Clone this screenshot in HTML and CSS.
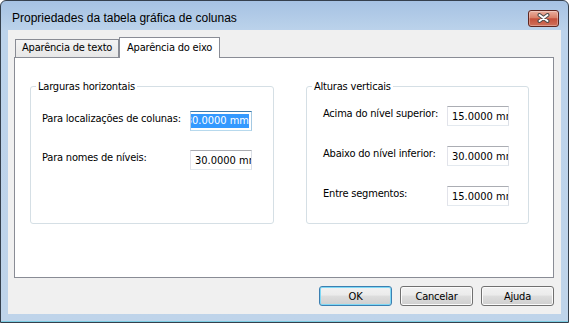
FILE: index.html
```html
<!DOCTYPE html>
<html lang="pt">

<head>
    <meta charset="UTF-8">
    <meta name="viewport" content="width=device-width, initial-scale=1.0">
    <link rel="stylesheet" href="styles.css">
    <title>Propriedades da tabela gráfica de colunas</title>
</head>

<body>
    <div class="window">

        <div class="titlebar">
            <span class="title">Propriedades da tabela gráfica de colunas</span>
            <button class="close" type="button">
                <svg width="13" height="10" viewBox="0 0 13 10">
                    <path d="M2.5 2 L10.5 8 M10.5 2 L2.5 8" stroke="#4a4a4a" stroke-width="4" stroke-linecap="round" fill="none" />
                    <path d="M2.5 2 L10.5 8 M10.5 2 L2.5 8" stroke="#ffffff" stroke-width="2" stroke-linecap="round" fill="none" />
                </svg>
            </button>
        </div>

        <div class="client">

            <div class="tabs">
                <div class="tab">Aparência de texto</div>
                <div class="tab active">Aparência do eixo</div>
            </div>

            <div class="panel">
                <fieldset class="group group-h">
                    <legend>Larguras horizontais</legend>
                    <div class="rows">
                        <span class="label">Para localizações de colunas:</span>
                        <div class="edit focused"><span class="sel">30.0000 mm</span></div>
                        <span class="label">Para nomes de níveis:</span>
                        <div class="edit">30.0000 mm</div>
                    </div>
                </fieldset>

                <fieldset class="group group-v">
                    <legend>Alturas verticais</legend>
                    <div class="rows">
                        <span class="label">Acima do nível superior:</span>
                        <div class="edit">15.0000 mm</div>
                        <span class="label">Abaixo do nível inferior:</span>
                        <div class="edit">30.0000 mm</div>
                        <span class="label">Entre segmentos:</span>
                        <div class="edit">15.0000 mm</div>
                    </div>
                </fieldset>
            </div>

            <div class="buttons">
                <button class="btn default" type="button">OK</button>
                <button class="btn" type="button">Cancelar</button>
                <button class="btn" type="button">Ajuda</button>
            </div>

        </div>
    </div>
</body>

</html>
```

FILE: styles.css
```css
html {
    box-sizing: border-box;
}

*,
*::before,
*::after {
    box-sizing: inherit;
}

body {
    margin: 0;
    background-color: #ffffff;
    font-family: "DejaVu Sans Condensed", "Liberation Sans", sans-serif;
    font-size: 11px;
    letter-spacing: -0.2px;
    color: #000000;
}

.window {
    display: flex;
    flex-direction: column;
    width: 569px;
    height: 323px;
    padding: 0 7px 8px;
    border: 1px solid #35404d;
    border-radius: 6px 6px 0 0;
    background: linear-gradient(#a6c2e3, #bcd3eb 30px, #bfd4ea);
    box-shadow: inset 0 -1px 0 #7ccde2;
}

.titlebar {
    display: flex;
    align-items: center;
    height: 29px;
    padding: 5px 0 0 4px;
}

.title {
    font-family: "Liberation Sans", sans-serif;
    font-size: 12px;
    letter-spacing: 0;
}

.close {
    display: flex;
    align-items: center;
    justify-content: center;
    width: 31px;
    height: 17px;
    margin-left: auto;
    margin-right: 2px;
    padding: 0;
    border: 1px solid #5e2620;
    border-radius: 3px;
    background: linear-gradient(#eab0a0, #d98068 45%, #c4503b 52%, #d0705a);
    box-shadow: inset 0 0 0 1px rgba(255, 255, 255, 0.3);
}

.client {
    flex: 1;
    display: flex;
    flex-direction: column;
    padding: 7px 7px 8px 6px;
    background-color: #f0f0f0;
}

.tabs {
    display: flex;
    align-items: flex-end;
    height: 20px;
    padding-left: 1px;
    position: relative;
    z-index: 1;
}

.tab {
    height: 18px;
    width: 104px;
    padding: 1px 0 0 6px;
    border: 1px solid #898c95;
    border-bottom: none;
    background: linear-gradient(#f4f4f4, #e7e7e7);
    white-space: nowrap;
}

.tab.active {
    width: 101px;
    height: 21px;
    margin-bottom: -1px;
    padding: 3px 0 0 7px;
    background: #ffffff;
}

.panel {
    display: flex;
    align-items: flex-start;
    gap: 32px;
    height: 221px;
    padding: 22px 0 0 15px;
    border: 1px solid #898c95;
    background-color: #ffffff;
}

.group {
    height: 144px;
    min-width: 0;
    margin: 0;
    padding: 0;
    border: 1px solid #d5dfe5;
    border-radius: 3px;
}

.group legend {
    margin-left: 5px;
    padding: 0 2px;
    line-height: 13px;
}

.group-h {
    width: 244px;
}

.group-v {
    width: 223px;
}

.rows {
    display: grid;
    align-items: start;
}

.group-h .rows {
    grid-template-columns: 148px 62px;
    row-gap: 19px;
    padding: 18px 0 0 11px;
}

.group-v .rows {
    grid-template-columns: 124px 62px;
    row-gap: 20px;
    padding: 13px 0 0 16px;
}

.label {
    padding-top: 1px;
    line-height: 13px;
    white-space: nowrap;
}

.edit {
    display: flex;
    align-items: center;
    height: 20px;
    padding-left: 4px;
    border: 1px solid;
    border-color: #abadb3 #dbdfe6 #e3e9ef #e2e3ea;
    background-color: #ffffff;
    letter-spacing: 0;
    white-space: nowrap;
    overflow: hidden;
}

.edit.focused {
    justify-content: flex-end;
    padding-right: 2px;
    border-color: #3d7bad #a4c9e3 #b7d9ed #b5cfe7;
}

.sel {
    line-height: 14px;
    background-color: #3399ff;
    color: #ffffff;
}

.buttons {
    display: flex;
    justify-content: flex-end;
    gap: 8px;
    margin-top: 8px;
}

.btn {
    width: 73px;
    height: 20px;
    padding: 0;
    border: 1px solid #707070;
    border-radius: 3px;
    background: linear-gradient(#f2f2f2, #ebebeb 45%, #dddddd 50%, #cfcfcf);
    box-shadow: inset 0 0 0 1px #fbfbfb;
    font-family: inherit;
    font-size: 11px;
    letter-spacing: inherit;
    color: #000000;
}

.btn.default {
    border-color: #3c7fb1;
    box-shadow: inset 0 0 0 1px #7fd8f5;
}
```
